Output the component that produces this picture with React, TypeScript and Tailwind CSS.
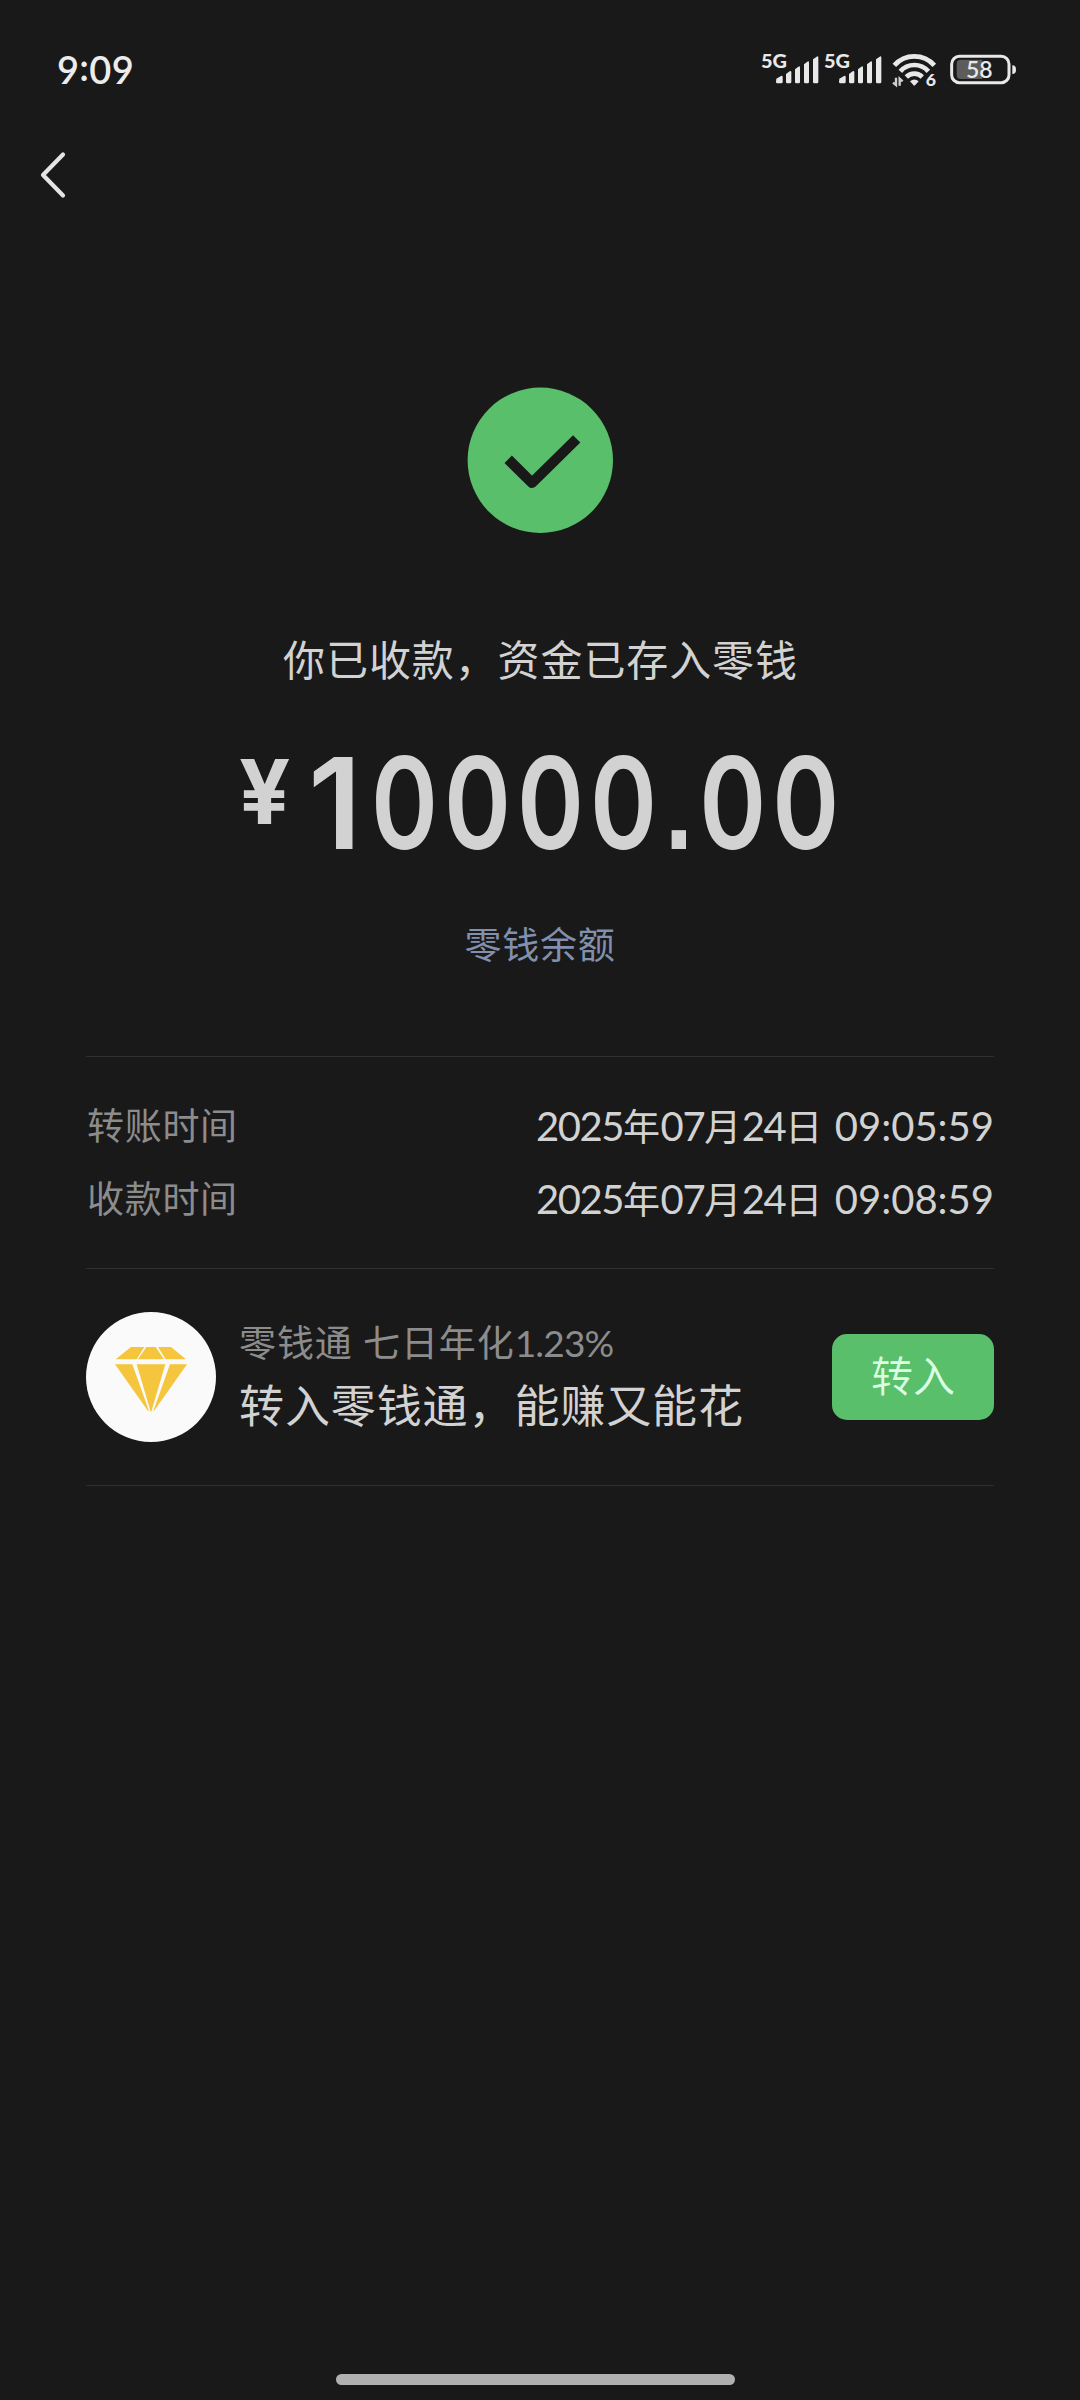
import React from "react";

const TIMES = [
  { label: "转账时间", date: "2025年07月24日", time: "09:05:59" },
  { label: "收款时间", date: "2025年07月24日", time: "09:08:59" },
];

function SignalIcon() {
  return (
    <svg width="63" height="50" viewBox="0 -30 189 150" fill="#e8e8e8" className="shrink-0">
      <text x="0" y="54" fontSize="59" fontWeight="900" fontFamily="Lato, sans-serif" textLength="78" lengthAdjust="spacingAndGlyphs">
        5G
      </text>
      <path d="M46 86l14 -8q5 -2 5 3v15q0 4 -4 4h-12q-4 0 -4 -4z" />
      <path d="M75 72l11 -8q5 -3 5 3v29q0 4 -4 4h-8q-4 0 -4 -4z" />
      <path d="M102 58l10 -8q5 -3 5 3v43q0 4 -4 4h-7q-4 0 -4 -4z" />
      <path d="M129 43l10 -8q5 -3 5 3v58q0 4 -4 4h-7q-4 0 -4 -4z" />
      <path d="M156 28l11 -8q5 -3 5 3v73q0 4 -4 4h-8q-4 0 -4 -4z" />
    </svg>
  );
}

function WifiIcon() {
  return (
    <svg width="50" height="50" viewBox="0 -30 150 150" className="ml-[3.5px] shrink-0">
      <g fill="none" stroke="#e8e8e8" strokeWidth="14">
        <path d="M13 46a80 80 0 0 1 120 0" />
        <path d="M31 64a56 56 0 0 1 84 0" />
        <path d="M49 81a34 34 0 0 1 48 0" />
      </g>
      <path d="M60 94q13 -11 26 0l-10 11q-3 3 -6 0z" fill="#e8e8e8" />
      <g fill="none" stroke="#d0d0d0" strokeWidth="7">
        <path d="M9 98l9 7V83M29 107V86l9 8" />
      </g>
      <text x="107" y="107" fontSize="53" fontWeight="900" fontFamily="Lato, sans-serif" fill="#e8e8e8">
        6
      </text>
    </svg>
  );
}

function BatteryIcon() {
  return (
    <svg width="68" height="50" viewBox="0 -30 204 150" className="ml-[10px] shrink-0">
      <rect x="5" y="19" width="172" height="79" rx="23" fill="none" stroke="#e8e8e8" strokeWidth="9" />
      <path d="M97 29v58H32q-12 0 -12 -12V41q0 -12 12 -12z" fill="#5c5c5c" />
      <path d="M187 46q11 0 11 13t-11 13z" fill="#e8e8e8" />
      <text x="48" y="83" fontSize="68" fontWeight="600" fontFamily="Lato, sans-serif" fill="#e8e8e8" textLength="80" lengthAdjust="spacingAndGlyphs">
        58
      </text>
    </svg>
  );
}

function DiamondIcon() {
  return (
    <svg width="72" height="66" viewBox="0 0 216 198" fill="#f5c53d" className="mt-[6px]">
      <path d="M48 0h40L65 37H2z" />
      <path d="M94 0h28l25 37H69z" />
      <path d="M129 0h39l44 36q-2 1 -4 1H152z" />
      <path d="M0 52h52l50 140q-3 0 -5 -3z" />
      <path d="M65 52h86l-43 145z" />
      <path d="M165 52h51L119 189q-2 3 -4 3z" />
    </svg>
  );
}

// digits sit tighter than the 年/月/日 characters between them
function DateText({ value }: { value: string }) {
  return (
    <span className="mr-[12px]">
      {value.split(/([年月日])/).map((part, i) =>
        /[年月日]/.test(part) ? (
          <span key={i} className="text-[37px] tracking-[0.5px]">
            {part}
          </span>
        ) : (
          <span key={i} className="tracking-[-1.4px]">
            {part}
          </span>
        )
      )}
    </span>
  );
}

export default function App() {
  return (
    <div className="flex h-[2400px] w-[1080px] flex-col overflow-hidden bg-[#191919] font-[Lato,'Noto_Sans_CJK_SC',sans-serif] text-[#d2d2d2]">
      <header className="flex h-[140px] items-start justify-between pt-[40px] pr-[62px] pl-[57px]">
        <span className="pt-[9px] text-[38px] leading-[40px] font-semibold tracking-[0.3px] text-[#ececec]">
          9<span className="relative -top-[3px]">:</span>09
        </span>
        <div className="flex">
          <SignalIcon />
          <SignalIcon />
          <WifiIcon />
          <BatteryIcon />
        </div>
      </header>

      <nav className="flex h-[247px] items-start pt-[10px] pl-[38px]">
        <button type="button" aria-label="返回">
          <svg width="30" height="50" viewBox="0 0 30 50" fill="none" stroke="#e4e4e4" strokeWidth="4.2">
            <path d="M25 4.5L5 25l20 20.5" strokeLinecap="round" strokeLinejoin="round" />
          </svg>
        </button>
      </nav>

      <section className="flex h-[669px] flex-col items-center">
        <svg width="146" height="147" viewBox="0 0 146 147" className="shrink-0">
          <circle cx="73.3" cy="73.3" r="72.7" fill="#59bf6b" />
          <path
            d="M41.2 72.3L65 95.9l44.7 -44"
            fill="none"
            stroke="#191919"
            strokeWidth="10.4"
            strokeLinejoin="round"
          />
        </svg>
        <p className="mt-[94px] pl-px text-[42px] leading-[64px] tracking-[0.9px]">你已收款，资金已存入零钱</p>
        <div className="mt-[32px] flex h-[194px] w-[602px] items-start font-[Inter,sans-serif] leading-[152px] font-semibold whitespace-nowrap">
          <span className="mt-[-2px] w-[69px] shrink-0 origin-left text-[90px] leading-[140px] font-bold">¥</span>
          <span className="mt-[3px] w-[63px] shrink-0 text-[127px]">1</span>
          <span className="mt-[3px] origin-left scale-x-[0.8] text-[127px] tracking-[7.5px]">
            0000
            <span className="ml-[2px] font-['Liberation_Sans',sans-serif] font-bold tracking-[8px]">.</span>
            00
          </span>
        </div>
        <a className="text-[37px] leading-[54px] tracking-[0.8px] text-[#8190ad]">零钱余额</a>
      </section>

      <main className="mx-[86px] flex flex-col">
        <dl className="flex h-[212px] flex-col border-t border-[#303030] pt-[32px]">
          {TIMES.map((row) => (
            <div key={row.label} className="flex h-[73px] items-center justify-between text-[37px]">
              <dt className="pt-px pl-px tracking-[0.7px] text-[#8c8c8c]">{row.label}</dt>
              <dd className="text-[40px]">
                <DateText value={row.date} />
                {row.time}
              </dd>
            </div>
          ))}
        </dl>

        <div className="flex h-[218px] items-center border-y border-[#303030]">
          <div className="flex size-[130px] items-center justify-center rounded-full bg-[#fafafa]">
            <DiamondIcon />
          </div>
          <div className="ml-[23px] flex-1 whitespace-nowrap">
            <p className="text-[37px] leading-[54px] tracking-[0.9px] text-[#8c8c8c]">
              零钱通 七日年化<span className="tracking-[-0.8px]">1.23%</span>
            </p>
            <p className="mt-[3px] text-[45px] leading-[66px] tracking-[0.9px]">转入零钱通，能赚又能花</p>
          </div>
          <button
            type="button"
            className="h-[86px] w-[162px] rounded-[15px] bg-[#59bf6b] pb-[2px] text-[42px] font-[350] text-[#dcffe4]"
          >
            转入
          </button>
        </div>
      </main>

      <div className="mt-auto mb-[15px] ml-[336px] h-[11px] w-[399px] rounded-full bg-[#b0b0b0]" />
    </div>
  );
}
